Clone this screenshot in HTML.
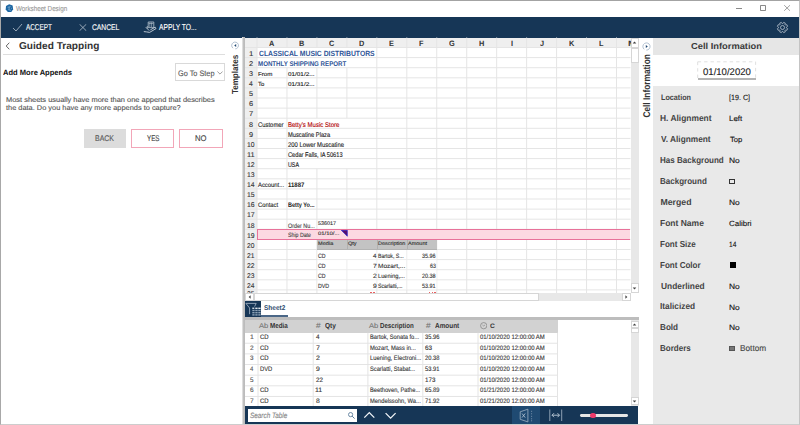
<!DOCTYPE html>
<html><head><meta charset="utf-8">
<style>
*{margin:0;padding:0;box-sizing:border-box}
html,body{width:800px;height:425px;overflow:hidden;background:#fff}
body{position:relative;font-family:"Liberation Sans",sans-serif;color:#333;text-rendering:geometricPrecision}
.a{position:absolute;white-space:nowrap;transform-origin:0 0;-webkit-text-stroke:0.12px currentColor}
</style></head><body>
<svg class="a" style="left:5px;top:4px" width="9" height="9" viewBox="0 0 9 9"><path d="M4.2 0.2L7.6 1.6 8.1 5.2 6.3 8 2.8 8.1 0.7 5.6 1 2z" fill="#1d67a3"/><path d="M2.6 3.3L5.6 2.6M4.1 3v2.6M3.3 5.6l2.6 0.8M6.2 4.2l0.8 0.4" stroke="#8fb8d8" stroke-width="0.7" fill="none"/></svg>
<div class="a" style="left:16.22px;top:5.00px;font-size:7.25px;line-height:7.25px;color:#999;transform:scaleX(0.865);">Worksheet Design</div>
<div class="a" style="left:736px;top:8px;width:5.8px;height:0.9px;background:#8a8a8a;"></div>
<div class="a" style="left:760.1px;top:5.2px;width:5.8px;height:5.8px;border:0.9px solid #8a8a8a;border-radius:0.8px"></div>
<svg class="a" style="left:784.4px;top:5.3px" width="6.2" height="6" viewBox="0 0 6.2 6"><path d="M0.2 0.2L6 5.8M6 0.2L0.2 5.8" stroke="#8a8a8a" stroke-width="0.8"/></svg>
<div class="a" style="left:0px;top:17px;width:800px;height:20.5px;background:#163656;"></div>
<svg class="a" style="left:12px;top:23px" width="11" height="9" viewBox="0 0 11 9"><path d="M1 5L4 8L10 1" stroke="#b7c3cf" stroke-width="0.8" fill="none"/></svg>
<div class="a" style="left:26.25px;top:23.00px;font-size:8.50px;line-height:8.50px;color:#fff;transform:scaleX(0.751);">ACCEPT</div>
<svg class="a" style="left:79px;top:24px" width="8" height="7" viewBox="0 0 8 7"><path d="M0.5 0.2L7.3 6.8M7.3 0.2L0.5 6.8" stroke="#b7c3cf" stroke-width="0.8"/></svg>
<div class="a" style="left:91.86px;top:24.00px;font-size:8.25px;line-height:8.25px;color:#fff;transform:scaleX(0.817);">CANCEL</div>
<svg class="a" style="left:143px;top:21px" width="14" height="13" viewBox="0 0 14 13"><path d="M5.2 1H10.8V6.6H5.2z" stroke="#b9c5d1" stroke-width="0.8" fill="none"/><path d="M6.8 1.5V6M8.6 1.5V6M5.6 2.5H10.4" stroke="#b9c5d1" stroke-width="0.6" fill="none"/><path d="M0.8 10.6L3.6 10.9 6.6 11.4 13 7.6 12.2 6.2 7.4 8.8M2.8 6.2L6.2 9.6" stroke="#c9d3dd" stroke-width="0.9" fill="none" stroke-linejoin="round"/><path d="M4.3 5V7.6" stroke="#b9c5d1" stroke-width="0.8"/></svg>
<div class="a" style="left:159.00px;top:23.00px;font-size:8.75px;line-height:8.75px;color:#fff;transform:scaleX(0.766);">APPLY TO...</div>
<svg class="a" style="left:775.7px;top:20.6px" width="13" height="13" viewBox="0 0 13 13"><circle cx="6.5" cy="6.5" r="2" stroke="#a9b6c3" stroke-width="0.9" fill="none"/><path d="M10.39 6.81 L11.58 7.61 L10.88 9.30 L9.47 9.03 L9.03 9.47 L9.30 10.88 L7.61 11.58 L6.81 10.39 L6.19 10.39 L5.39 11.58 L3.70 10.88 L3.97 9.47 L3.53 9.03 L2.12 9.30 L1.42 7.61 L2.61 6.81 L2.61 6.19 L1.42 5.39 L2.12 3.70 L3.53 3.97 L3.97 3.53 L3.70 2.12 L5.39 1.42 L6.19 2.61 L6.81 2.61 L7.61 1.42 L9.30 2.12 L9.03 3.53 L9.47 3.97 L10.88 3.70 L11.58 5.39 L10.39 6.19Z" stroke="#a9b6c3" stroke-width="0.9" stroke-linejoin="round" fill="none"/></svg>
<svg class="a" style="left:5px;top:42px" width="6" height="8" viewBox="0 0 6 8"><path d="M4.3 0.7L1.2 4l3.1 3.3" stroke="#555" stroke-width="0.9" fill="none"/></svg>
<div class="a" style="left:19.10px;top:42.00px;font-size:10.00px;line-height:10.00px;font-weight:bold;-webkit-text-stroke:0;color:#333;transform:scaleX(1.011);">Guided Trapping</div>
<div class="a" style="left:3px;top:54px;width:222px;height:1.3px;background:#dedede;"></div>
<div class="a" style="left:3.31px;top:69.00px;font-size:7.75px;line-height:7.75px;font-weight:bold;-webkit-text-stroke:0;color:#111;transform:scaleX(0.975);">Add More Appends</div>
<div class="a" style="left:175px;top:63.3px;width:49.7px;height:18px;border:1px solid #d9d9d9"></div>
<div class="a" style="left:177.63px;top:70.00px;font-size:8.00px;line-height:8.00px;color:#555;transform:scaleX(0.914);">Go To Step</div>
<svg class="a" style="left:216.5px;top:70.5px" width="6" height="4" viewBox="0 0 6 4"><path d="M0.4 0.5L3 3.1 5.6 0.5" stroke="#888" stroke-width="0.8" fill="none"/></svg>
<div class="a" style="left:5.61px;top:97.00px;font-size:7.00px;line-height:7.00px;color:#555;transform:scaleX(1.062);">Most sheets usually have more than one append that describes</div>
<div class="a" style="left:6.09px;top:105.00px;font-size:7.00px;line-height:7.00px;color:#555;transform:scaleX(1.056);">the data. Do you have any more appends to capture?</div>
<div class="a" style="left:84px;top:129px;width:42px;height:19px;background:#dcdcdc;"></div>
<div class="a" style="left:95.34px;top:135.00px;font-size:8.25px;line-height:8.25px;color:#555;transform:scaleX(0.843);">BACK</div>
<div class="a" style="left:131.2px;top:129px;width:43.2px;height:19px;border:1.2px solid #f2a6b8"></div>
<div class="a" style="left:146.84px;top:135.00px;font-size:8.25px;line-height:8.25px;color:#444;transform:scaleX(0.754);">YES</div>
<div class="a" style="left:179px;top:129px;width:43.6px;height:19px;border:1.2px solid #f2a6b8"></div>
<div class="a" style="left:195.09px;top:135.00px;font-size:8.25px;line-height:8.25px;color:#444;transform:scaleX(0.929);">NO</div>
<svg class="a" style="left:231px;top:40.8px" width="9" height="9" viewBox="0 0 9 9"><path d="M2 7.2A3.4 3.4 0 1 1 4.2 7.9" stroke="#9fb3c7" stroke-width="0.8" fill="none"/><path d="M5.2 3L3.2 4.5 5.2 6z" fill="#1d4670"/></svg>
<div class="a" style="left:0;top:0;width:0;height:0;transform-origin:0 0;transform:translate(232.1px,94.1px) rotate(-90deg)"><div class="a" style="left:-0.08px;top:-1.00px;font-size:8.75px;line-height:8.75px;font-weight:bold;-webkit-text-stroke:0;color:#333;transform:scaleX(0.920);">Templates</div></div>
<div class="a" style="left:241.7px;top:37px;width:3.5px;height:388px;background:linear-gradient(90deg,#ececec,#c4c4c4 45%,#b3b3b3 70%,#c8c8c8);"></div>
<div class="a" style="left:245px;top:37.5px;width:385.5px;height:255.89999999999998px;background:#fff;"></div>
<div class="a" style="left:245px;top:37.5px;width:385.5px;height:10px;background:#efefef;"></div>
<div class="a" style="left:245px;top:37.5px;width:12px;height:255.89999999999998px;background:#efefef;"></div>
<svg class="a" style="left:0;top:0" width="800" height="425"><line x1="257.0" y1="37.5" x2="257.0" y2="293.4" stroke="#e5e5e5" stroke-width="1"/><line x1="286.96" y1="37.5" x2="286.96" y2="47.5" stroke="#e5e5e5" stroke-width="1"/><line x1="286.96" y1="67.7" x2="286.96" y2="293.4" stroke="#e5e5e5" stroke-width="1"/><line x1="316.92" y1="37.5" x2="316.92" y2="47.5" stroke="#e5e5e5" stroke-width="1"/><line x1="316.92" y1="67.7" x2="316.92" y2="118.2" stroke="#e5e5e5" stroke-width="1"/><line x1="316.92" y1="168.7" x2="316.92" y2="293.4" stroke="#e5e5e5" stroke-width="1"/><line x1="346.88" y1="37.5" x2="346.88" y2="47.5" stroke="#e5e5e5" stroke-width="1"/><line x1="346.88" y1="67.7" x2="346.88" y2="118.2" stroke="#e5e5e5" stroke-width="1"/><line x1="346.88" y1="168.7" x2="346.88" y2="293.4" stroke="#e5e5e5" stroke-width="1"/><line x1="376.84000000000003" y1="37.5" x2="376.84000000000003" y2="293.4" stroke="#e5e5e5" stroke-width="1"/><line x1="406.8" y1="37.5" x2="406.8" y2="293.4" stroke="#e5e5e5" stroke-width="1"/><line x1="436.76" y1="37.5" x2="436.76" y2="293.4" stroke="#e5e5e5" stroke-width="1"/><line x1="466.72" y1="37.5" x2="466.72" y2="293.4" stroke="#e5e5e5" stroke-width="1"/><line x1="496.68" y1="37.5" x2="496.68" y2="293.4" stroke="#e5e5e5" stroke-width="1"/><line x1="526.64" y1="37.5" x2="526.64" y2="293.4" stroke="#e5e5e5" stroke-width="1"/><line x1="556.6" y1="37.5" x2="556.6" y2="293.4" stroke="#e5e5e5" stroke-width="1"/><line x1="586.56" y1="37.5" x2="586.56" y2="293.4" stroke="#e5e5e5" stroke-width="1"/><line x1="616.52" y1="37.5" x2="616.52" y2="293.4" stroke="#e5e5e5" stroke-width="1"/><line x1="245" y1="47.5" x2="630.5" y2="47.5" stroke="#e5e5e5" stroke-width="1"/><line x1="245" y1="57.6" x2="630.5" y2="57.6" stroke="#e5e5e5" stroke-width="1"/><line x1="245" y1="67.7" x2="630.5" y2="67.7" stroke="#e5e5e5" stroke-width="1"/><line x1="245" y1="77.8" x2="630.5" y2="77.8" stroke="#e5e5e5" stroke-width="1"/><line x1="245" y1="87.9" x2="630.5" y2="87.9" stroke="#e5e5e5" stroke-width="1"/><line x1="245" y1="98.0" x2="630.5" y2="98.0" stroke="#e5e5e5" stroke-width="1"/><line x1="245" y1="108.1" x2="630.5" y2="108.1" stroke="#e5e5e5" stroke-width="1"/><line x1="245" y1="118.2" x2="630.5" y2="118.2" stroke="#e5e5e5" stroke-width="1"/><line x1="245" y1="128.3" x2="630.5" y2="128.3" stroke="#e5e5e5" stroke-width="1"/><line x1="245" y1="138.39999999999998" x2="630.5" y2="138.39999999999998" stroke="#e5e5e5" stroke-width="1"/><line x1="245" y1="148.5" x2="630.5" y2="148.5" stroke="#e5e5e5" stroke-width="1"/><line x1="245" y1="158.6" x2="630.5" y2="158.6" stroke="#e5e5e5" stroke-width="1"/><line x1="245" y1="168.7" x2="630.5" y2="168.7" stroke="#e5e5e5" stroke-width="1"/><line x1="245" y1="178.79999999999998" x2="630.5" y2="178.79999999999998" stroke="#e5e5e5" stroke-width="1"/><line x1="245" y1="188.9" x2="630.5" y2="188.9" stroke="#e5e5e5" stroke-width="1"/><line x1="245" y1="199.0" x2="630.5" y2="199.0" stroke="#e5e5e5" stroke-width="1"/><line x1="245" y1="209.1" x2="630.5" y2="209.1" stroke="#e5e5e5" stroke-width="1"/><line x1="245" y1="219.2" x2="630.5" y2="219.2" stroke="#e5e5e5" stroke-width="1"/><line x1="245" y1="229.29999999999998" x2="630.5" y2="229.29999999999998" stroke="#e5e5e5" stroke-width="1"/><line x1="245" y1="239.4" x2="630.5" y2="239.4" stroke="#e5e5e5" stroke-width="1"/><line x1="245" y1="249.5" x2="630.5" y2="249.5" stroke="#e5e5e5" stroke-width="1"/><line x1="245" y1="259.6" x2="630.5" y2="259.6" stroke="#e5e5e5" stroke-width="1"/><line x1="245" y1="269.7" x2="630.5" y2="269.7" stroke="#e5e5e5" stroke-width="1"/><line x1="245" y1="279.79999999999995" x2="630.5" y2="279.79999999999995" stroke="#e5e5e5" stroke-width="1"/><line x1="245" y1="289.9" x2="630.5" y2="289.9" stroke="#e5e5e5" stroke-width="1"/><rect x="317.6" y="250.0" width="119" height="39.39999999999998" fill="#fff"/><line x1="317.5" y1="259.6" x2="437" y2="259.6" stroke="#ededed" stroke-width="1"/><line x1="317.5" y1="269.7" x2="437" y2="269.7" stroke="#ededed" stroke-width="1"/><line x1="317.5" y1="279.79999999999995" x2="437" y2="279.79999999999995" stroke="#ededed" stroke-width="1"/><line x1="346.88" y1="259.6" x2="346.88" y2="289.9" stroke="#ededed" stroke-width="1"/><line x1="376.84" y1="249.5" x2="376.84" y2="289.9" stroke="#ededed" stroke-width="1"/><line x1="406.8" y1="249.5" x2="406.8" y2="289.9" stroke="#ededed" stroke-width="1"/></svg>
<div class="a" style="left:269.35px;top:40.00px;font-size:7.75px;line-height:7.75px;font-weight:bold;-webkit-text-stroke:0;color:#333;transform:scaleX(0.950);">A</div>
<div class="a" style="left:299.23px;top:40.00px;font-size:7.75px;line-height:7.75px;font-weight:bold;-webkit-text-stroke:0;color:#333;transform:scaleX(0.950);">B</div>
<div class="a" style="left:329.21px;top:40.00px;font-size:7.75px;line-height:7.75px;font-weight:bold;-webkit-text-stroke:0;color:#333;transform:scaleX(0.950);">C</div>
<div class="a" style="left:359.14px;top:40.00px;font-size:7.75px;line-height:7.75px;font-weight:bold;-webkit-text-stroke:0;color:#333;transform:scaleX(0.950);">D</div>
<div class="a" style="left:389.28px;top:40.00px;font-size:7.75px;line-height:7.75px;font-weight:bold;-webkit-text-stroke:0;color:#333;transform:scaleX(0.950);">E</div>
<div class="a" style="left:419.44px;top:40.00px;font-size:7.75px;line-height:7.75px;font-weight:bold;-webkit-text-stroke:0;color:#333;transform:scaleX(0.950);">F</div>
<div class="a" style="left:448.98px;top:40.00px;font-size:7.75px;line-height:7.75px;font-weight:bold;-webkit-text-stroke:0;color:#333;transform:scaleX(0.950);">G</div>
<div class="a" style="left:479.07px;top:40.00px;font-size:7.75px;line-height:7.75px;font-weight:bold;-webkit-text-stroke:0;color:#333;transform:scaleX(0.950);">H</div>
<div class="a" style="left:510.67px;top:40.00px;font-size:7.75px;line-height:7.75px;font-weight:bold;-webkit-text-stroke:0;color:#333;transform:scaleX(0.950);">I</div>
<div class="a" style="left:539.78px;top:40.00px;font-size:7.75px;line-height:7.75px;font-weight:bold;-webkit-text-stroke:0;color:#333;transform:scaleX(0.950);">J</div>
<div class="a" style="left:568.75px;top:40.00px;font-size:7.75px;line-height:7.75px;font-weight:bold;-webkit-text-stroke:0;color:#333;transform:scaleX(0.950);">K</div>
<div class="a" style="left:599.18px;top:40.00px;font-size:7.75px;line-height:7.75px;font-weight:bold;-webkit-text-stroke:0;color:#333;transform:scaleX(0.950);">L</div>
<div class="a" style="left:627.97px;top:40.00px;font-size:7.75px;line-height:7.75px;font-weight:bold;-webkit-text-stroke:0;color:#333;transform:scaleX(1.253);">M</div>
<div class="a" style="left:248.71px;top:51.00px;font-size:7.00px;line-height:7.00px;color:#333;transform:scaleX(1.117);">1</div>
<div class="a" style="left:248.93px;top:61.00px;font-size:7.00px;line-height:7.00px;color:#333;transform:scaleX(1.068);">2</div>
<div class="a" style="left:249.01px;top:71.00px;font-size:7.00px;line-height:7.00px;color:#333;transform:scaleX(1.023);">3</div>
<div class="a" style="left:249.17px;top:81.00px;font-size:7.00px;line-height:7.00px;color:#333;transform:scaleX(0.962);">4</div>
<div class="a" style="left:249.01px;top:91.00px;font-size:7.00px;line-height:7.00px;color:#333;transform:scaleX(1.023);">5</div>
<div class="a" style="left:248.93px;top:101.00px;font-size:7.00px;line-height:7.00px;color:#333;transform:scaleX(1.045);">6</div>
<div class="a" style="left:248.93px;top:111.00px;font-size:7.00px;line-height:7.00px;color:#333;transform:scaleX(1.068);">7</div>
<div class="a" style="left:248.97px;top:122.00px;font-size:7.00px;line-height:7.00px;color:#333;transform:scaleX(1.033);">8</div>
<div class="a" style="left:248.97px;top:132.00px;font-size:7.00px;line-height:7.00px;color:#333;transform:scaleX(1.045);">9</div>
<div class="a" style="left:247.09px;top:142.00px;font-size:7.00px;line-height:7.00px;color:#333;transform:scaleX(0.971);">10</div>
<div class="a" style="left:247.04px;top:152.00px;font-size:7.00px;line-height:7.00px;color:#333;transform:scaleX(1.062);">11</div>
<div class="a" style="left:247.08px;top:162.00px;font-size:7.00px;line-height:7.00px;color:#333;transform:scaleX(0.986);">12</div>
<div class="a" style="left:247.09px;top:172.00px;font-size:7.00px;line-height:7.00px;color:#333;transform:scaleX(0.976);">13</div>
<div class="a" style="left:247.09px;top:182.00px;font-size:7.00px;line-height:7.00px;color:#333;transform:scaleX(0.967);">14</div>
<div class="a" style="left:247.09px;top:192.00px;font-size:7.00px;line-height:7.00px;color:#333;transform:scaleX(0.976);">15</div>
<div class="a" style="left:247.09px;top:202.00px;font-size:7.00px;line-height:7.00px;color:#333;transform:scaleX(0.976);">16</div>
<div class="a" style="left:247.08px;top:212.00px;font-size:7.00px;line-height:7.00px;color:#333;transform:scaleX(0.986);">17</div>
<div class="a" style="left:247.09px;top:223.00px;font-size:7.00px;line-height:7.00px;color:#333;transform:scaleX(0.976);">18</div>
<div class="a" style="left:247.08px;top:233.00px;font-size:7.00px;line-height:7.00px;color:#333;transform:scaleX(0.981);">19</div>
<div class="a" style="left:247.27px;top:243.00px;font-size:7.00px;line-height:7.00px;color:#333;transform:scaleX(0.948);">20</div>
<div class="a" style="left:247.27px;top:253.00px;font-size:7.00px;line-height:7.00px;color:#333;transform:scaleX(0.957);">21</div>
<div class="a" style="left:247.26px;top:263.00px;font-size:7.00px;line-height:7.00px;color:#333;transform:scaleX(0.962);">22</div>
<div class="a" style="left:247.27px;top:273.00px;font-size:7.00px;line-height:7.00px;color:#333;transform:scaleX(0.952);">23</div>
<div class="a" style="left:247.27px;top:283.00px;font-size:7.00px;line-height:7.00px;color:#333;transform:scaleX(0.943);">24</div>
<div class="a" style="left:247.27px;top:291.00px;font-size:7.00px;line-height:7.00px;color:#333;transform:scaleX(0.952);clip-path:inset(0 0 70% 0)">25</div>
<div class="a" style="left:258.58px;top:50.00px;font-size:7.50px;line-height:7.50px;font-weight:bold;-webkit-text-stroke:0;color:#2f5597;transform:scaleX(0.909);">CLASSICAL MUSIC DISTRIBUTORS</div>
<div class="a" style="left:258.45px;top:62.00px;font-size:6.75px;line-height:6.75px;font-weight:bold;-webkit-text-stroke:0;color:#2f5597;transform:scaleX(0.912);">MONTHLY SHIPPING REPORT</div>
<div class="a" style="left:257.50px;top:73.00px;font-size:5.75px;line-height:5.75px;color:#222;transform:scaleX(1.080);">From</div>
<div class="a" style="left:287.75px;top:73.00px;font-size:5.50px;line-height:5.50px;color:#222;transform:scaleX(1.154);">01/01/2...</div>
<div class="a" style="left:257.88px;top:82.00px;font-size:6.00px;line-height:6.00px;color:#222;">To</div>
<div class="a" style="left:287.75px;top:83.00px;font-size:5.50px;line-height:5.50px;color:#222;transform:scaleX(1.154);">01/31/2...</div>
<div class="a" style="left:257.61px;top:123.00px;font-size:6.75px;line-height:6.75px;color:#222;transform:scaleX(0.872);">Customer</div>
<div class="a" style="left:287.52px;top:123.00px;font-size:6.75px;line-height:6.75px;color:#b00000;transform:scaleX(0.892);">Betty's Music Store</div>
<div class="a" style="left:287.54px;top:133.00px;font-size:6.75px;line-height:6.75px;color:#222;transform:scaleX(0.852);">Muscatine Plaza</div>
<div class="a" style="left:287.71px;top:143.00px;font-size:6.75px;line-height:6.75px;color:#222;transform:scaleX(0.872);">200 Lower Muscatine</div>
<div class="a" style="left:287.72px;top:153.00px;font-size:6.75px;line-height:6.75px;color:#222;transform:scaleX(0.841);">Cedar Falls, IA 50613</div>
<div class="a" style="left:287.60px;top:163.00px;font-size:6.75px;line-height:6.75px;color:#222;transform:scaleX(0.793);">USA</div>
<div class="a" style="left:258.20px;top:183.00px;font-size:6.50px;line-height:6.50px;color:#222;transform:scaleX(0.904);">Account...</div>
<div class="a" style="left:288.04px;top:183.00px;font-size:6.50px;line-height:6.50px;font-weight:bold;-webkit-text-stroke:0;color:#222;transform:scaleX(0.920);">11887</div>
<div class="a" style="left:257.91px;top:203.00px;font-size:6.50px;line-height:6.50px;color:#222;transform:scaleX(0.894);">Contact</div>
<div class="a" style="left:288.04px;top:203.00px;font-size:6.50px;line-height:6.50px;font-weight:bold;-webkit-text-stroke:0;color:#222;transform:scaleX(0.851);">Betty Yo...</div>
<div class="a" style="left:256.8px;top:228.6px;width:373.7px;height:11.8px;background:#fcd9e2;border:1.7px solid #e8729a;border-right:none"></div>
<div class="a" style="left:287.96px;top:224.00px;font-size:6.50px;line-height:6.50px;color:#444;transform:scaleX(0.832);">Order Nu...</div>
<div class="a" style="left:317.88px;top:222.00px;font-size:5.25px;line-height:5.25px;color:#333;transform:scaleX(1.027);">536017</div>
<div class="a" style="left:287.96px;top:233.00px;font-size:6.25px;line-height:6.25px;color:#444;transform:scaleX(0.837);">Ship Date</div>
<div class="a" style="left:317.86px;top:232.00px;font-size:5.00px;line-height:5.00px;color:#333;transform:scaleX(1.184);">01/10/...</div>
<svg class="a" style="left:341px;top:229.7px" width="7" height="7" viewBox="0 0 7 7"><path d="M0.3 0.3H6.3V6.2z" fill="#5a0f6a" stroke="#2020d0" stroke-width="0.7"/></svg>
<div class="a" style="left:317px;top:240.2px;width:120px;height:9.4px;background:#c3c3c3;"></div>
<div class="a" style="left:346.5px;top:240.2px;width:1px;height:9.4px;background:#b0b0b0;"></div>
<div class="a" style="left:376.5px;top:240.2px;width:1px;height:9.4px;background:#b0b0b0;"></div>
<div class="a" style="left:406.5px;top:240.2px;width:1px;height:9.4px;background:#b0b0b0;"></div>
<div class="a" style="left:317px;top:248.9px;width:120px;height:0.8px;background:#b3b3b3;"></div>
<div class="a" style="left:317.55px;top:242.00px;font-size:5.00px;line-height:5.00px;color:#333;transform:scaleX(1.119);">Media</div>
<div class="a" style="left:347.85px;top:242.00px;font-size:5.00px;line-height:5.00px;color:#333;transform:scaleX(1.099);">Qty</div>
<div class="a" style="left:377.76px;top:242.00px;font-size:5.00px;line-height:5.00px;color:#333;transform:scaleX(1.092);">Description</div>
<div class="a" style="left:407.90px;top:242.00px;font-size:5.00px;line-height:5.00px;color:#333;transform:scaleX(1.105);">Amount</div>
<div class="a" style="left:317.74px;top:254.00px;font-size:6.25px;line-height:6.25px;color:#333;transform:scaleX(0.833);">CD</div>
<div class="a" style="left:372.88px;top:254.00px;font-size:6.25px;line-height:6.25px;color:#333;transform:scaleX(0.982);">4</div>
<div class="a" style="left:377.79px;top:254.00px;font-size:6.25px;line-height:6.25px;color:#333;transform:scaleX(0.828);">Bartok, S...</div>
<div class="a" style="left:422.48px;top:254.00px;font-size:6.25px;line-height:6.25px;color:#333;transform:scaleX(0.866);">35.96</div>
<div class="a" style="left:317.74px;top:264.00px;font-size:6.25px;line-height:6.25px;color:#333;transform:scaleX(0.833);">CD</div>
<div class="a" style="left:372.66px;top:264.00px;font-size:6.25px;line-height:6.25px;color:#333;transform:scaleX(1.090);">7</div>
<div class="a" style="left:377.68px;top:264.00px;font-size:6.25px;line-height:6.25px;color:#333;transform:scaleX(1.045);">Mozart,...</div>
<div class="a" style="left:430.14px;top:264.00px;font-size:6.25px;line-height:6.25px;color:#333;transform:scaleX(0.847);">63</div>
<div class="a" style="left:317.74px;top:274.00px;font-size:6.25px;line-height:6.25px;color:#333;transform:scaleX(0.833);">CD</div>
<div class="a" style="left:372.66px;top:274.00px;font-size:6.25px;line-height:6.25px;color:#333;transform:scaleX(1.090);">2</div>
<div class="a" style="left:377.74px;top:274.00px;font-size:6.25px;line-height:6.25px;color:#333;transform:scaleX(0.917);">Luening,...</div>
<div class="a" style="left:422.43px;top:274.00px;font-size:6.25px;line-height:6.25px;color:#333;transform:scaleX(0.870);">20.38</div>
<div class="a" style="left:317.58px;top:284.00px;font-size:6.25px;line-height:6.25px;color:#333;transform:scaleX(0.846);">DVD</div>
<div class="a" style="left:372.70px;top:284.00px;font-size:6.25px;line-height:6.25px;color:#333;transform:scaleX(1.067);">9</div>
<div class="a" style="left:377.97px;top:284.00px;font-size:6.25px;line-height:6.25px;color:#333;transform:scaleX(0.831);">Scarlatti,...</div>
<div class="a" style="left:422.48px;top:284.00px;font-size:6.25px;line-height:6.25px;color:#333;transform:scaleX(0.868);">53.91</div>
<div class="a" style="left:370px;top:292px;width:6px;height:1.2px;background:repeating-linear-gradient(90deg,#e86060 0 1.5px,transparent 1.5px 3px)"></div>
<div class="a" style="left:428.5px;top:292px;width:7.5px;height:1.2px;background:repeating-linear-gradient(90deg,#e86060 0 1.5px,transparent 1.5px 2.6px)"></div>
<div class="a" style="left:630.5px;top:37.5px;width:8px;height:255.9px;background:#e8e8e8;"></div>
<div class="a" style="left:630.5px;top:37.5px;width:8px;height:10px;background:#fff;border:1px solid #d6d6d6"></div>
<svg class="a" style="left:632px;top:40.5px" width="5" height="3" viewBox="0 0 5 3"><path d="M0.7 2.6L2.5 0.6 4.3 2.6z" fill="#444"/></svg>
<div class="a" style="left:630.5px;top:48px;width:8px;height:15.3px;background:#fff;border:1px solid #d6d6d6"></div>
<div class="a" style="left:630.5px;top:283.3px;width:8px;height:9.4px;background:#fff;border:1px solid #d6d6d6"></div>
<svg class="a" style="left:632px;top:287px" width="5" height="3" viewBox="0 0 5 3"><path d="M0.7 0.4L2.5 2.4 4.3 0.4z" fill="#444"/></svg>
<div class="a" style="left:245px;top:293.4px;width:385.5px;height:7.2px;background:#e8e8e8;"></div>
<div class="a" style="left:245px;top:293.4px;width:9.2px;height:7.2px;background:#fff;border:1px solid #d6d6d6"></div>
<svg class="a" style="left:248px;top:295.3px" width="3" height="4" viewBox="0 0 3 4"><path d="M2.6 0.3L0.6 2 2.6 3.7z" fill="#444"/></svg>
<div class="a" style="left:254.2px;top:293.4px;width:285.2px;height:7.2px;background:#fff;border:1px solid #d6d6d6"></div>
<div class="a" style="left:621.5px;top:293.4px;width:9px;height:7.2px;background:#fff;border:1px solid #d6d6d6"></div>
<svg class="a" style="left:625px;top:295.3px" width="3" height="4" viewBox="0 0 3 4"><path d="M0.4 0.3L2.4 2 0.4 3.7z" fill="#444"/></svg>
<div class="a" style="left:630.5px;top:293.4px;width:8px;height:7.2px;background:#fff;"></div>
<div class="a" style="left:245px;top:300.6px;width:393.5px;height:16.4px;background:#fff;"></div>
<div class="a" style="left:245px;top:301.2px;width:16px;height:15.6px;background:#163656;"></div>
<svg class="a" style="left:245px;top:301.2px" width="16" height="16" viewBox="0 0 16 16"><path d="M0.9 2.4H11.2L9.6 5.6M0.9 2.4L4.6 7V13.2" stroke="#a9b9c9" stroke-width="0.8" fill="none" stroke-linejoin="round"/><rect x="7.3" y="6.6" width="2.0" height="1.3" fill="#e3e9ef"/><rect x="10.3" y="6.6" width="2.3" height="1.4" fill="#e3e9ef"/><rect x="13.3" y="6.6" width="2.3" height="1.4" fill="#e3e9ef"/><rect x="7.3" y="8.8" width="2.3" height="1.4" fill="#8ea3b7"/><rect x="10.3" y="8.8" width="2.3" height="1.4" fill="#8ea3b7"/><rect x="13.3" y="8.8" width="2.3" height="1.4" fill="#8ea3b7"/><rect x="7.3" y="11" width="2.3" height="1.4" fill="#8ea3b7"/><rect x="10.3" y="11" width="2.3" height="1.4" fill="#8ea3b7"/><rect x="13.3" y="11" width="2.3" height="1.4" fill="#8ea3b7"/><rect x="7.3" y="13.2" width="2.3" height="1.4" fill="#8ea3b7"/><rect x="10.3" y="13.2" width="2.3" height="1.4" fill="#8ea3b7"/><rect x="13.3" y="13.2" width="2.3" height="1.4" fill="#8ea3b7"/></svg>
<div class="a" style="left:261px;top:315.2px;width:26.8px;height:1.6px;background:#4b6787;"></div>
<div class="a" style="left:264.01px;top:305.00px;font-size:7.00px;line-height:7.00px;font-weight:bold;-webkit-text-stroke:0;color:#2c4a6c;transform:scaleX(0.926);">Sheet2</div>
<div class="a" style="left:245px;top:317px;width:393.5px;height:3px;background:#bdbdbd;"></div>
<div class="a" style="left:245px;top:320px;width:385.5px;height:86px;background:#fff;"></div>
<div class="a" style="left:245px;top:320px;width:312.5px;height:12.8px;background:#d2d2d2;"></div>
<svg class="a" style="left:0;top:0" width="800" height="425"><line x1="245" y1="343.24" x2="557.5" y2="343.24" stroke="#e4e4e4" stroke-width="1"/><line x1="245" y1="353.88" x2="557.5" y2="353.88" stroke="#e4e4e4" stroke-width="1"/><line x1="245" y1="364.52" x2="557.5" y2="364.52" stroke="#e4e4e4" stroke-width="1"/><line x1="245" y1="375.16" x2="557.5" y2="375.16" stroke="#e4e4e4" stroke-width="1"/><line x1="245" y1="385.80" x2="557.5" y2="385.80" stroke="#e4e4e4" stroke-width="1"/><line x1="245" y1="396.44" x2="557.5" y2="396.44" stroke="#e4e4e4" stroke-width="1"/><line x1="245" y1="407.08" x2="557.5" y2="407.08" stroke="#e4e4e4" stroke-width="1"/><line x1="258" y1="332.8" x2="258" y2="406" stroke="#e4e4e4" stroke-width="1"/><line x1="313.2" y1="332.8" x2="313.2" y2="406" stroke="#e4e4e4" stroke-width="1"/><line x1="367.9" y1="332.8" x2="367.9" y2="406" stroke="#e4e4e4" stroke-width="1"/><line x1="422.8" y1="332.8" x2="422.8" y2="406" stroke="#e4e4e4" stroke-width="1"/><line x1="478" y1="332.8" x2="478" y2="406" stroke="#e4e4e4" stroke-width="1"/><line x1="557.5" y1="332.8" x2="557.5" y2="406" stroke="#e4e4e4" stroke-width="1"/></svg>
<div class="a" style="left:259.00px;top:323.00px;font-size:7.00px;line-height:7.00px;color:#777;transform:scaleX(1.090);">Ab</div>
<div class="a" style="left:270.09px;top:322.00px;font-size:7.25px;line-height:7.25px;font-weight:bold;-webkit-text-stroke:0;color:#333;transform:scaleX(0.868);">Media</div>
<div class="a" style="left:316.46px;top:322.00px;font-size:7.75px;line-height:7.75px;color:#777;transform:scaleX(1.065);">#</div>
<div class="a" style="left:324.74px;top:322.00px;font-size:7.25px;line-height:7.25px;font-weight:bold;-webkit-text-stroke:0;color:#333;transform:scaleX(0.903);">Qty</div>
<div class="a" style="left:369.00px;top:323.00px;font-size:7.00px;line-height:7.00px;color:#777;transform:scaleX(1.090);">Ab</div>
<div class="a" style="left:379.60px;top:322.00px;font-size:7.25px;line-height:7.25px;font-weight:bold;-webkit-text-stroke:0;color:#333;transform:scaleX(0.847);">Description</div>
<div class="a" style="left:425.96px;top:322.00px;font-size:7.75px;line-height:7.75px;color:#777;transform:scaleX(1.065);">#</div>
<div class="a" style="left:434.84px;top:322.00px;font-size:7.25px;line-height:7.25px;font-weight:bold;-webkit-text-stroke:0;color:#333;transform:scaleX(0.885);">Amount</div>
<svg class="a" style="left:479.8px;top:322.2px" width="7.4" height="7.4" viewBox="0 0 8 8"><circle cx="4" cy="4" r="3.4" stroke="#777" stroke-width="0.7" fill="none"/><path d="M2.6 3.2L4 4.3 5.4 3.2" stroke="#777" stroke-width="0.6" fill="none"/></svg>
<div class="a" style="left:489.73px;top:324.00px;font-size:6.50px;line-height:6.50px;font-weight:bold;-webkit-text-stroke:0;color:#333;transform:scaleX(1.033);">C</div>
<div class="a" style="left:249.68px;top:335.00px;font-size:6.50px;line-height:6.50px;color:#555;transform:scaleX(1.061);">1</div>
<div class="a" style="left:259.70px;top:335.00px;font-size:6.50px;line-height:6.50px;color:#333;transform:scaleX(0.915);">CD</div>
<div class="a" style="left:315.87px;top:335.00px;font-size:6.50px;line-height:6.50px;color:#333;transform:scaleX(0.975);">4</div>
<div class="a" style="left:369.94px;top:335.00px;font-size:6.50px;line-height:6.50px;color:#333;transform:scaleX(0.882);">Bartok, Sonata fo...</div>
<div class="a" style="left:425.27px;top:335.00px;font-size:6.50px;line-height:6.50px;color:#333;transform:scaleX(0.884);">35.96</div>
<div class="a" style="left:479.76px;top:335.00px;font-size:6.50px;line-height:6.50px;color:#333;transform:scaleX(0.914);">01/10/2020 12:00:00 AM</div>
<div class="a" style="left:249.87px;top:346.00px;font-size:6.50px;line-height:6.50px;color:#555;transform:scaleX(1.014);">2</div>
<div class="a" style="left:259.70px;top:346.00px;font-size:6.50px;line-height:6.50px;color:#333;transform:scaleX(0.915);">CD</div>
<div class="a" style="left:315.65px;top:346.00px;font-size:6.50px;line-height:6.50px;color:#333;transform:scaleX(1.082);">7</div>
<div class="a" style="left:369.93px;top:346.00px;font-size:6.50px;line-height:6.50px;color:#333;transform:scaleX(0.895);">Mozart, Mass in...</div>
<div class="a" style="left:425.18px;top:346.00px;font-size:6.50px;line-height:6.50px;color:#333;transform:scaleX(0.980);">63</div>
<div class="a" style="left:479.76px;top:346.00px;font-size:6.50px;line-height:6.50px;color:#333;transform:scaleX(0.914);">01/10/2020 12:00:00 AM</div>
<div class="a" style="left:249.95px;top:356.00px;font-size:6.50px;line-height:6.50px;color:#555;transform:scaleX(0.972);">3</div>
<div class="a" style="left:259.70px;top:356.00px;font-size:6.50px;line-height:6.50px;color:#333;transform:scaleX(0.915);">CD</div>
<div class="a" style="left:315.65px;top:356.00px;font-size:6.50px;line-height:6.50px;color:#333;transform:scaleX(1.082);">2</div>
<div class="a" style="left:369.94px;top:356.00px;font-size:6.50px;line-height:6.50px;color:#333;transform:scaleX(0.891);">Luening, Electroni...</div>
<div class="a" style="left:425.21px;top:356.00px;font-size:6.50px;line-height:6.50px;color:#333;transform:scaleX(0.887);">20.38</div>
<div class="a" style="left:479.76px;top:356.00px;font-size:6.50px;line-height:6.50px;color:#333;transform:scaleX(0.914);">01/10/2020 12:00:00 AM</div>
<div class="a" style="left:250.08px;top:367.00px;font-size:6.50px;line-height:6.50px;color:#555;transform:scaleX(0.914);">4</div>
<div class="a" style="left:259.54px;top:367.00px;font-size:6.50px;line-height:6.50px;color:#333;transform:scaleX(0.891);">DVD</div>
<div class="a" style="left:315.69px;top:367.00px;font-size:6.50px;line-height:6.50px;color:#333;transform:scaleX(1.059);">9</div>
<div class="a" style="left:370.14px;top:367.00px;font-size:6.50px;line-height:6.50px;color:#333;transform:scaleX(0.879);">Scarlatti, Stabat...</div>
<div class="a" style="left:425.27px;top:367.00px;font-size:6.50px;line-height:6.50px;color:#333;transform:scaleX(0.885);">53.91</div>
<div class="a" style="left:479.76px;top:367.00px;font-size:6.50px;line-height:6.50px;color:#333;transform:scaleX(0.914);">01/10/2020 12:00:00 AM</div>
<div class="a" style="left:249.95px;top:378.00px;font-size:6.50px;line-height:6.50px;color:#555;transform:scaleX(0.972);">5</div>
<div class="a" style="left:315.68px;top:378.00px;font-size:6.50px;line-height:6.50px;color:#333;transform:scaleX(0.975);">22</div>
<div class="a" style="left:425.04px;top:378.00px;font-size:6.50px;line-height:6.50px;color:#333;transform:scaleX(0.953);">173</div>
<div class="a" style="left:479.76px;top:378.00px;font-size:6.50px;line-height:6.50px;color:#333;transform:scaleX(0.914);">01/10/2020 12:00:00 AM</div>
<div class="a" style="left:249.88px;top:388.00px;font-size:6.50px;line-height:6.50px;color:#555;">6</div>
<div class="a" style="left:259.70px;top:388.00px;font-size:6.50px;line-height:6.50px;color:#333;transform:scaleX(0.915);">CD</div>
<div class="a" style="left:315.48px;top:388.00px;font-size:6.50px;line-height:6.50px;color:#333;transform:scaleX(1.076);">11</div>
<div class="a" style="left:369.94px;top:388.00px;font-size:6.50px;line-height:6.50px;color:#333;transform:scaleX(0.879);">Beethoven, Pathe...</div>
<div class="a" style="left:425.21px;top:388.00px;font-size:6.50px;line-height:6.50px;color:#333;transform:scaleX(0.889);">65.89</div>
<div class="a" style="left:479.76px;top:388.00px;font-size:6.50px;line-height:6.50px;color:#333;transform:scaleX(0.914);">01/21/2020 12:00:00 AM</div>
<div class="a" style="left:249.87px;top:399.00px;font-size:6.50px;line-height:6.50px;color:#555;transform:scaleX(1.014);">7</div>
<div class="a" style="left:259.70px;top:399.00px;font-size:6.50px;line-height:6.50px;color:#333;transform:scaleX(0.915);">CD</div>
<div class="a" style="left:315.69px;top:399.00px;font-size:6.50px;line-height:6.50px;color:#333;transform:scaleX(1.047);">8</div>
<div class="a" style="left:369.94px;top:399.00px;font-size:6.50px;line-height:6.50px;color:#333;transform:scaleX(0.888);">Mendelssohn, Wa...</div>
<div class="a" style="left:425.21px;top:399.00px;font-size:6.50px;line-height:6.50px;color:#333;transform:scaleX(0.891);">71.92</div>
<div class="a" style="left:479.76px;top:399.00px;font-size:6.50px;line-height:6.50px;color:#333;transform:scaleX(0.914);">01/21/2020 12:00:00 AM</div>
<div class="a" style="left:630.5px;top:320px;width:8px;height:86px;background:#e8e8e8;"></div>
<div class="a" style="left:630.5px;top:320.6px;width:8px;height:7.8px;background:#fff;border:1px solid #d6d6d6"></div>
<svg class="a" style="left:632px;top:323px" width="5" height="3" viewBox="0 0 5 3"><path d="M0.7 2.6L2.5 0.6 4.3 2.6z" fill="#444"/></svg>
<div class="a" style="left:630.5px;top:328.4px;width:8px;height:5px;background:#fff;border:1px solid #d6d6d6"></div>
<div class="a" style="left:630.5px;top:396.7px;width:8px;height:8.3px;background:#fff;border:1px solid #d6d6d6"></div>
<svg class="a" style="left:632px;top:399.5px" width="5" height="3" viewBox="0 0 5 3"><path d="M0.7 0.4L2.5 2.4 4.3 0.4z" fill="#444"/></svg>
<div class="a" style="left:245px;top:406.1px;width:393.1px;height:17.8px;background:#163656;"></div>
<div class="a" style="left:247.75px;top:408.9px;width:109.35px;height:13.1px;background:#fff;"></div>
<div class="a" style="left:250.41px;top:412.00px;font-size:7.75px;line-height:7.75px;font-style:italic;color:#858585;transform:scaleX(0.822);">Search Table</div>
<svg class="a" style="left:347px;top:411px" width="9" height="9" viewBox="0 0 9 9"><circle cx="3.6" cy="3.6" r="2.1" stroke="#5f7f9c" stroke-width="0.9" fill="none"/><path d="M5.1 5.1L7.6 7.6" stroke="#5f7f9c" stroke-width="1"/></svg>
<svg class="a" style="left:363px;top:411px" width="40" height="9" viewBox="0 0 40 9"><path d="M1.3 6.6L6.3 1.6 11.3 6.6M22.6 2.1L27.6 7.1 32.6 2.1" stroke="#f0f4f8" stroke-width="1.3" fill="none"/></svg>
<div class="a" style="left:512px;top:406.1px;width:28px;height:17.8px;background:#1f4a72;"></div>
<svg class="a" style="left:518px;top:408px" width="16" height="15" viewBox="0 0 16 15"><path d="M2.2 3.8L9.9 1.2V13.9L2.2 11.3z" stroke="#9fb2c4" stroke-width="0.8" fill="none"/><path d="M4 5.5L7.2 9.6M7.2 5.5L4 9.6" stroke="#b9c8d6" stroke-width="0.8"/><path d="M13.6 2.8v1M13.6 5.3v1M13.6 7.8v1M13.6 10.3v1M13.6 12.3v1" stroke="#9fb2c4" stroke-width="0.7"/></svg>
<svg class="a" style="left:548px;top:408px" width="16" height="15" viewBox="0 0 16 15"><path d="M1.8 1.5V13M13.7 1.5V13" stroke="#9aabbd" stroke-width="0.9"/><path d="M4.2 7.2H11.3M6 5.2L4 7.2 6 9.2M9.5 5.2L11.5 7.2 9.5 9.2" stroke="#c2cfdb" stroke-width="0.9" fill="none"/></svg>
<div class="a" style="left:580px;top:414px;width:48px;height:2.9px;background:#e6e6e6;border-radius:1.4px"></div>
<div class="a" style="left:590.2px;top:412.6px;width:5.8px;height:5.8px;border-radius:50%;background:#ee3a6a"></div>
<div class="a" style="left:638.5px;top:37.5px;width:14.5px;height:387px;background:#fff;"></div>
<svg class="a" style="left:641.5px;top:41.5px" width="9" height="9" viewBox="0 0 9 9"><path d="M2.2 7.3A3.6 3.6 0 1 1 4.3 8.1" stroke="#9fb3c7" stroke-width="0.8" fill="none"/><path d="M3.8 3L5.8 4.5 3.8 6z" fill="#1d4670"/></svg>
<div class="a" style="left:0;top:0;width:0;height:0;transform-origin:0 0;transform:translate(643.4px,117.6px) rotate(-90deg)"><div class="a" style="left:-0.33px;top:0.00px;font-size:9.75px;line-height:9.75px;font-weight:bold;-webkit-text-stroke:0;color:#333;transform:scaleX(0.855);">Cell Information</div></div>
<div class="a" style="left:653px;top:37.5px;width:146px;height:387px;background:#e9e9e9;"></div>
<div class="a" style="left:653px;top:37.5px;width:146px;height:17px;background:#e6e6e6;"></div>
<div class="a" style="left:653px;top:54.5px;width:146px;height:31.5px;background:#fff;"></div>
<div class="a" style="left:690.88px;top:42.00px;font-size:8.75px;line-height:8.75px;font-weight:bold;-webkit-text-stroke:0;color:#3a3a3a;transform:scaleX(1.065);">Cell Information</div>
<svg class="a" style="left:697px;top:61px" width="60" height="19" viewBox="0 0 60 19"><path d="M0.7 0.8H58.6V17.5M0.7 0.8V17.5" stroke="#dcdcdc" stroke-width="0.9" stroke-dasharray="3.4 3" fill="none"/></svg>
<div class="a" style="left:697.6px;top:78.4px;width:58.1px;height:1.5px;background:#b4b4b4;"></div>
<div class="a" style="left:702.52px;top:68.00px;font-size:9.75px;line-height:9.75px;color:#222;transform:scaleX(0.980);">01/10/2020</div>
<div class="a" style="left:660.53px;top:94.00px;font-size:8.00px;line-height:8.00px;font-weight:bold;-webkit-text-stroke:0;color:#444;transform:scaleX(0.897);">Location</div>
<div class="a" style="left:729.30px;top:94.00px;font-size:7.50px;line-height:7.50px;color:#111;transform:scaleX(0.951);">[19. C]</div>
<div class="a" style="left:660.45px;top:114.00px;font-size:8.75px;line-height:8.75px;font-weight:bold;-webkit-text-stroke:0;color:#444;transform:scaleX(0.960);">H. Alignment</div>
<div class="a" style="left:729.17px;top:115.00px;font-size:7.50px;line-height:7.50px;color:#111;transform:scaleX(1.055);">Left</div>
<div class="a" style="left:660.96px;top:135.00px;font-size:8.75px;line-height:8.75px;font-weight:bold;-webkit-text-stroke:0;color:#444;transform:scaleX(0.948);">V. Alignment</div>
<div class="a" style="left:729.65px;top:136.00px;font-size:7.50px;line-height:7.50px;color:#111;transform:scaleX(1.024);">Top</div>
<div class="a" style="left:660.48px;top:156.00px;font-size:8.75px;line-height:8.75px;font-weight:bold;-webkit-text-stroke:0;color:#444;transform:scaleX(0.917);">Has Background</div>
<div class="a" style="left:729.33px;top:157.00px;font-size:7.50px;line-height:7.50px;color:#111;transform:scaleX(1.120);">No</div>
<div class="a" style="left:660.48px;top:177.00px;font-size:8.75px;line-height:8.75px;font-weight:bold;-webkit-text-stroke:0;color:#444;transform:scaleX(0.917);">Background</div>
<div class="a" style="left:660.43px;top:198.00px;font-size:8.75px;line-height:8.75px;font-weight:bold;-webkit-text-stroke:0;color:#444;">Merged</div>
<div class="a" style="left:729.33px;top:199.00px;font-size:7.50px;line-height:7.50px;color:#111;transform:scaleX(1.120);">No</div>
<div class="a" style="left:660.45px;top:219.00px;font-size:8.75px;line-height:8.75px;font-weight:bold;-webkit-text-stroke:0;color:#444;transform:scaleX(0.970);">Font Name</div>
<div class="a" style="left:729.40px;top:220.00px;font-size:7.50px;line-height:7.50px;color:#111;transform:scaleX(1.061);">Calibri</div>
<div class="a" style="left:660.48px;top:240.00px;font-size:8.75px;line-height:8.75px;font-weight:bold;-webkit-text-stroke:0;color:#444;transform:scaleX(0.921);">Font Size</div>
<div class="a" style="left:729.31px;top:241.00px;font-size:7.50px;line-height:7.50px;color:#111;transform:scaleX(0.876);">14</div>
<div class="a" style="left:660.48px;top:261.00px;font-size:8.75px;line-height:8.75px;font-weight:bold;-webkit-text-stroke:0;color:#444;transform:scaleX(0.919);">Font Color</div>
<div class="a" style="left:660.50px;top:282.00px;font-size:8.75px;line-height:8.75px;font-weight:bold;-webkit-text-stroke:0;color:#444;transform:scaleX(0.956);">Underlined</div>
<div class="a" style="left:729.33px;top:283.00px;font-size:7.50px;line-height:7.50px;color:#111;transform:scaleX(1.120);">No</div>
<div class="a" style="left:660.46px;top:302.00px;font-size:8.75px;line-height:8.75px;font-weight:bold;-webkit-text-stroke:0;color:#444;transform:scaleX(0.949);">Italicized</div>
<div class="a" style="left:729.33px;top:304.00px;font-size:7.50px;line-height:7.50px;color:#111;transform:scaleX(1.120);">No</div>
<div class="a" style="left:660.47px;top:323.00px;font-size:8.75px;line-height:8.75px;font-weight:bold;-webkit-text-stroke:0;color:#444;transform:scaleX(0.930);">Bold</div>
<div class="a" style="left:729.33px;top:324.00px;font-size:7.50px;line-height:7.50px;color:#111;transform:scaleX(1.120);">No</div>
<div class="a" style="left:660.48px;top:344.00px;font-size:8.75px;line-height:8.75px;font-weight:bold;-webkit-text-stroke:0;color:#444;transform:scaleX(0.916);">Borders</div>
<div class="a" style="left:729px;top:178.50px;width:6px;height:5.6px;border:1px solid #333"></div>
<div class="a" style="left:729.5px;top:262.10px;width:6px;height:6px;background:#000"></div>
<div class="a" style="left:729px;top:345.50px;width:6.2px;height:5.8px;background:#777;border:0.8px solid #555"></div>
<div class="a" style="left:739.64px;top:344.00px;font-size:8.50px;line-height:8.50px;color:#444;transform:scaleX(0.972);">Bottom</div>
<div class="a" style="left:0;top:0;width:800px;height:425px;border:1px solid #b9b9b9;border-top-color:#a3a3a3;border-left-color:#a8a8a8;border-right-color:#c4c4c4;border-bottom-color:#cdcdcd"></div>
</body></html>
